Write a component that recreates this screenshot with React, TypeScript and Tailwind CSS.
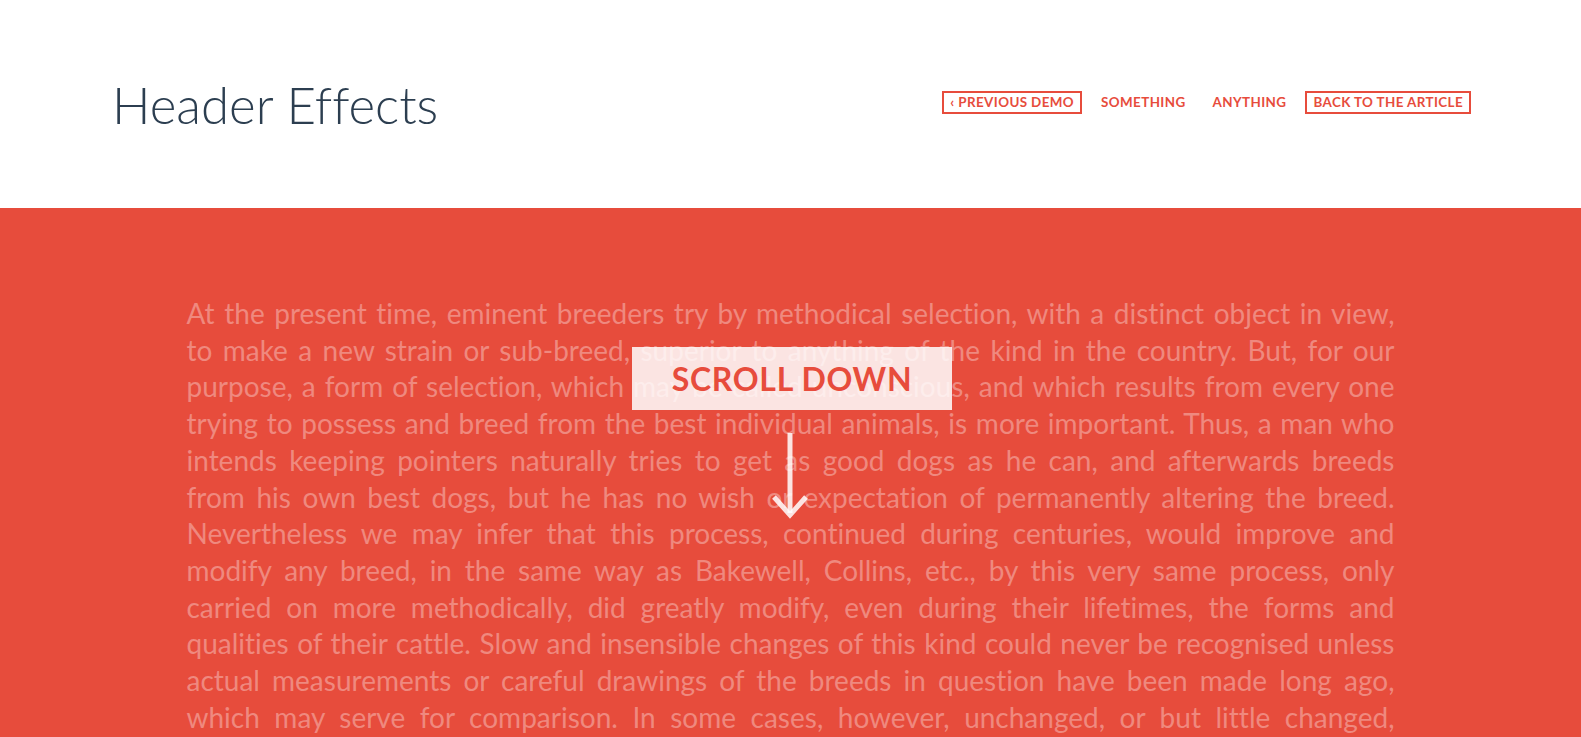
// the opening lines are set one per row so each one stays justified edge to edge
const lines = [
  "At the present time, eminent breeders try by methodical selection, with a distinct object in view,",
  "to make a new strain or sub-breed, superior to anything of the kind in the country. But, for our",
  "purpose, a form of selection, which may be called unconscious, and which results from every one",
  "trying to possess and breed from the best individual animals, is more important. Thus, a man who",
  "intends keeping pointers naturally tries to get as good dogs as he can, and afterwards breeds",
  "from his own best dogs, but he has no wish or expectation of permanently altering the breed.",
  "Nevertheless we may infer that this process, continued during centuries, would improve and",
  "modify any breed, in the same way as Bakewell, Collins, etc., by this very same process, only",
  "carried on more methodically, did greatly modify, even during their lifetimes, the forms and",
  "qualities of their cattle. Slow and insensible changes of this kind could never be recognised unless",
  "actual measurements or careful drawings of the breeds in question have been made long ago,",
  "which may serve for comparison. In some cases, however, unchanged, or but little changed,",
];

const rest =
  "individuals of the same breed exist in less civilised districts, where the breed has been less improved. There is reason to believe that King Charles's spaniel has been unconsciously modified to a large extent since the time of that monarch.";

const links = [
  { label: "‹ Previous Demo", boxed: true },
  { label: "Something", boxed: false },
  { label: "Anything", boxed: false },
  { label: "Back to the Article", boxed: true },
];

const App = () => {
  return (
    <div className="relative min-h-screen bg-white font-['Lato',sans-serif] [font-variant-ligatures:none]">
      {/* top bar */}
      <header className="flex h-[208px] items-center justify-between pl-[112px] pr-[110px]">
        <h1 className="text-[51px] font-light leading-none text-[#2c3e50]">Header Effects</h1>
        <nav className="-mt-[3px] flex items-center gap-[11px]">
          {links.map((link) => (
            <a
              key={link.label}
              href="#"
              className={`border-2 px-[6px] py-[2px] text-[13.4px] font-bold uppercase leading-[15px] tracking-[0.4px] text-[#e74c3c] ${
                link.boxed ? "border-[#e74c3c]" : "border-transparent"
              }`}
            >
              {link.label}
            </a>
          ))}
        </nav>
      </header>

      {/* body copy */}
      <section className="bg-[#e74c3c] pb-20 pt-[87px]">
        <div className="mx-auto w-[1208px] text-[28px] leading-[36.7px] text-white/35">
          {lines.map((line) => (
            <p key={line} className="text-justify [text-align-last:justify]">
              {line}
            </p>
          ))}
          <p className="text-justify">{rest}</p>
        </div>
      </section>

      {/* scroll hint */}
      <div className="absolute left-[632px] top-[347px] flex h-[63px] w-[320px] items-center justify-center bg-white/85">
        <span className="text-[32px] font-bold uppercase leading-none tracking-[0.7px] text-[#e74c3c]">
          Scroll Down
        </span>
      </div>
      <svg
        className="absolute left-[770px] top-[433px]"
        width="40"
        height="88"
        viewBox="0 0 40 88"
        fill="none"
        stroke="rgba(255,255,255,0.85)"
        strokeWidth="5"
      >
        <line x1="20" y1="0" x2="20" y2="80" />
        <polyline points="4,64 20,82 36,64" strokeLinejoin="miter" />
      </svg>
    </div>
  );
};

export default App;
